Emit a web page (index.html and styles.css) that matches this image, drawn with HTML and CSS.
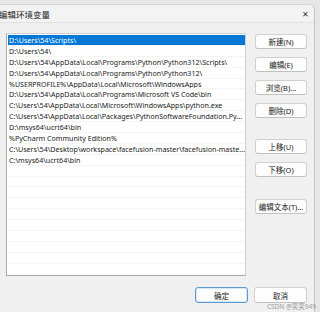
FILE: index.html
```html
<!DOCTYPE html>
<html lang="zh-CN">

<head>
    <meta charset="UTF-8">
    <title>编辑环境变量</title>
    <link rel="stylesheet" href="styles.css">
</head>

<body>
    <div class="window">
        <div class="titlebar">
            <span class="title">编辑环境变量</span>
            <span class="close">✕</span>
        </div>

        <div class="content">
            <div class="main">
                <ul class="path-list">
                    <li class="selected">D:\Users\54\Scripts\</li>
                    <li>D:\Users\54\</li>
                    <li>D:\Users\54\AppData\Local\Programs\Python\Python312\Scripts\</li>
                    <li>D:\Users\54\AppData\Local\Programs\Python\Python312\</li>
                    <li>%USERPROFILE%\AppData\Local\Microsoft\WindowsApps</li>
                    <li>D:\Users\54\AppData\Local\Programs\Microsoft VS Code\bin</li>
                    <li>C:\Users\54\AppData\Local\Microsoft\WindowsApps\python.exe</li>
                    <li>C:\Users\54\AppData\Local\Packages\PythonSoftwareFoundation.Py...</li>
                    <li>D:\msys64\ucrt64\bin</li>
                    <li>%PyCharm Community Edition%</li>
                    <li>C:\Users\54\Desktop\workspace\facefusion-master\facefusion-maste...</li>
                    <li>C:\msys64\ucrt64\bin</li>
                    <li></li>
                    <li></li>
                    <li></li>
                    <li></li>
                    <li></li>
                    <li></li>
                    <li></li>
                    <li></li>
                    <li></li>
                    <li></li>
                </ul>

                <div class="side-buttons">
                    <button class="btn">新建(N)</button>
                    <button class="btn">编辑(E)</button>
                    <button class="btn">浏览(B)...</button>
                    <button class="btn">删除(D)</button>
                    <button class="btn gap-top">上移(U)</button>
                    <button class="btn">下移(O)</button>
                    <button class="btn gap-top-lg">编辑文本(T)...</button>
                </div>
            </div>

            <div class="footer">
                <button class="btn btn-big btn-default">确定</button>
                <button class="btn btn-big">取消</button>
            </div>
        </div>
    </div>

    <div class="watermark">CSDN @笑笑949</div>
</body>

</html>
```

FILE: styles.css
```css
body {
    margin: 0;
    width: 320px;
    height: 312px;
    overflow: hidden;
    background-color: #e6e6e6;
    font-family: 'Noto Sans', 'Noto Sans CJK SC', sans-serif;
    color: #1a1a1a;
    position: relative;
}

.window {
    margin-top: 4px;
    width: 315px;
    height: 320px;
    background-color: #f0f0f0;
    border-right: 1px solid #c4c4c4;
    border-top: 1px solid #d6d6d6;
    border-top-right-radius: 6px;
    box-sizing: border-box;
}

.titlebar {
    height: 17px;
    display: flex;
    align-items: center;
    justify-content: space-between;
    background-color: #f3f3f3;
    border-bottom: 1px solid #e2e2e2;
    border-top-right-radius: 6px;
}

.title {
    font-size: 8.5px;
    margin-left: -1px;
    color: #222;
}

.close {
    font-size: 8px;
    margin-right: 5px;
    color: #333;
}

.content {
    padding: 10px 0 0 6px;
}

.main {
    display: flex;
    gap: 9px;
}

.path-list {
    list-style-type: none;
    margin: 0;
    padding: 1px 0 1px 1px;
    width: 240px;
    height: 243px;
    box-sizing: border-box;
    background-color: #ffffff;
    border: 1px solid #cfcfcf;
    border-left-color: #a8a8a8;
    border-bottom-color: #a8a8a8;
    overflow: hidden;
}

.path-list li {
    height: 10.9px;
    line-height: 10.9px;
    font-size: 7.1px;
    padding-left: 1px;
    border-bottom: 1px solid #f4f4f4;
    box-sizing: border-box;
    white-space: nowrap;
    overflow: hidden;
    text-overflow: ellipsis;
}

.path-list li.selected {
    background-color: #0078d7;
    color: #ffffff;
}

.side-buttons {
    display: flex;
    flex-direction: column;
    gap: 8px;
    padding-top: 1px;
}

.btn {
    width: 52px;
    height: 15px;
    padding: 0;
    font-family: 'Noto Sans', 'Noto Sans CJK SC', sans-serif;
    font-size: 7.5px;
    color: #1a1a1a;
    background-color: #fdfdfd;
    border: 1px solid #d0d0d0;
    border-bottom-color: #c0c0c0;
    border-radius: 3px;
}

.gap-top {
    margin-top: 13px;
}

.gap-top-lg {
    margin-top: 14px;
}

.footer {
    display: flex;
    justify-content: flex-end;
    gap: 6px;
    padding-right: 7px;
    margin-top: 11px;
}

.btn-big {
    width: 53px;
    height: 16px;
}

.btn-default {
    border: 1px solid #5b9bd5;
    box-shadow: inset 0 0 0 1px #d6e8f7;
}

.watermark {
    position: absolute;
    right: 4px;
    bottom: 1px;
    font-size: 6.5px;
    color: #9a9a9a;
}
```
